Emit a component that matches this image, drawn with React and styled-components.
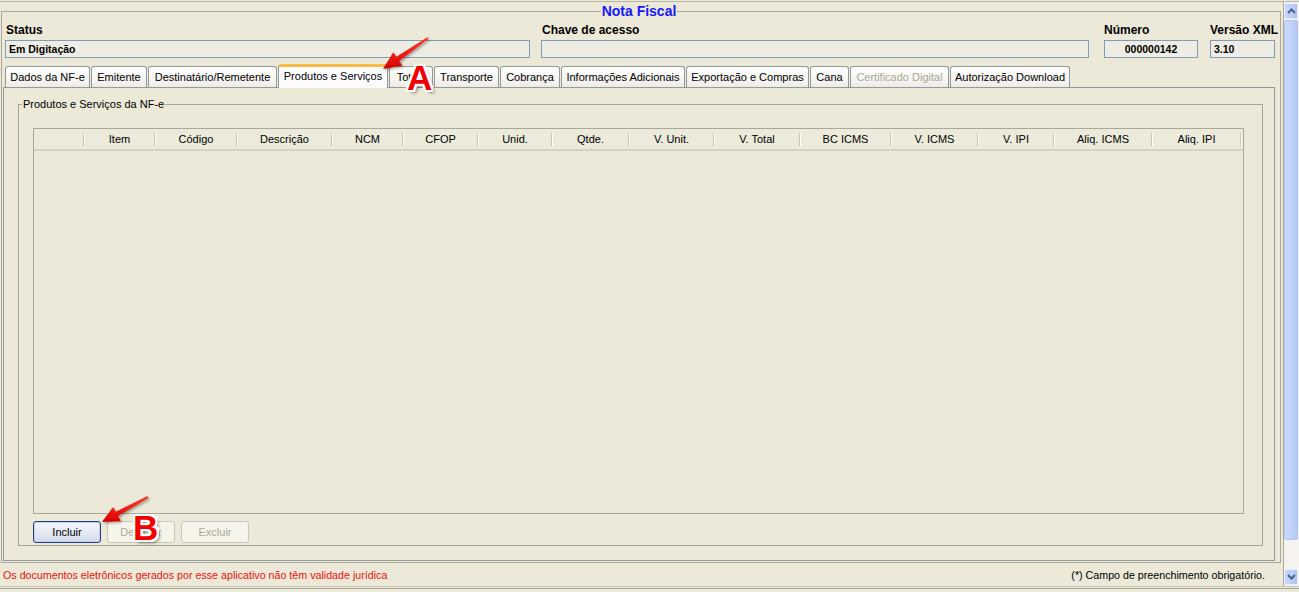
import React from "react";
import styled, { createGlobalStyle } from "styled-components";

const GlobalStyle = createGlobalStyle`
  html, body {
    margin: 0;
    padding: 0;
  }
  body {
    background: #ece9d8;
    font-family: "Liberation Sans", Arial, sans-serif;
    font-size: 11px;
    color: #000;
    overflow: hidden;
  }
`;

const Screen = styled.div`
  position: relative;
  width: 1299px;
  height: 592px;
  display: flex;
  flex-direction: column;
  background: #ece9d8;
  overflow: hidden;
`;

const TopEdge = styled.div`
  flex: none;
  height: 1px;
  border-bottom: 1px solid #b8b5a6;
`;

const BottomEdge = styled.div`
  flex: none;
  height: 5px;
  border-top: 1px solid #c9c6b8;
  position: relative;
  &::after {
    content: "";
    position: absolute;
    left: 0;
    right: 0;
    top: 1px;
    height: 1px;
    background: #a9a696;
  }
`;

const Body = styled.div`
  flex: 1;
  display: flex;
  min-height: 0;
`;

const Main = styled.div`
  flex: 1;
  display: flex;
  flex-direction: column;
  min-width: 0;
`;

/* ---------- outer titled frame ---------- */

const Frame = styled.fieldset`
  margin: 1px 2px 0 1px;
  padding: 4px 5px 1px 1px;
  border: 1px solid #aca899;
  min-width: 0;
`;

const FrameTitle = styled.legend`
  margin: 0 auto;
  padding: 0 1px;
  font-size: 14px;
  line-height: 16px;
  font-weight: bold;
  color: #1818ff;
`;

const FieldRow = styled.div`
  display: flex;
  padding-left: 2px;
`;

const Field = styled.div`
  width: ${({ $w }) => $w}px;
  margin-left: ${({ $ml }) => $ml || 0}px;
  display: flex;
  flex-direction: column;
`;

const Label = styled.div`
  font-size: 12px;
  line-height: 14px;
  font-weight: bold;
  padding-left: ${({ $pl }) => $pl || 0}px;
  margin-bottom: 3px;
  white-space: nowrap;
`;

const Input = styled.div`
  height: 16px;
  border: 1px solid #7f9db9;
  background: #efede3;
  font-size: 10.5px;
  font-weight: bold;
  line-height: 16px;
  padding: 0 3px;
  text-align: ${({ $center }) => ($center ? "center" : "left")};
`;

/* ---------- tabs ---------- */

const TabRow = styled.div`
  margin-top: 6px;
  height: 23px;
  display: flex;
  align-items: flex-end;
  gap: 1px;
  padding-left: 2px;
  position: relative;
  z-index: 1;
`;

const Tab = styled.div`
  box-sizing: border-box;
  width: ${({ $w }) => $w}px;
  height: ${({ $active }) => ($active ? 24 : 21)}px;
  margin-bottom: ${({ $active }) => ($active ? -1 : 0)}px;
  border: 1px solid #919b9c;
  border-bottom: none;
  border-top: ${({ $active }) =>
    $active ? "3px solid #f9bd45" : "1px solid #919b9c"};
  border-radius: 3px 3px 0 0;
  background: ${({ $active }) =>
    $active ? "#fcfcfe" : "linear-gradient(#fefefe, #f4f3ee 70%, #ecebe5)"};
  color: ${({ $disabled }) => ($disabled ? "#aca899" : "#000")};
  font-size: 11px;
  line-height: ${({ $active }) => ($active ? 19 : 20)}px;
  text-align: center;
  white-space: nowrap;
  overflow: hidden;
`;

const Panel = styled.div`
  border: 1px solid #919b9c;
  padding: 10px 11px 14px 14px;
`;

/* ---------- inner group ---------- */

const Group = styled.fieldset`
  margin: 0;
  padding: 17px 18px 2px 14px;
  border: 1px solid #a5a597;
  min-width: 0;
`;

const GroupTitle = styled.legend`
  margin-left: -11px;
  padding: 0 1px;
  font-size: 11px;
  line-height: 13px;
`;

const Table = styled.div`
  height: 384px;
  border: 1px solid #aca899;
  display: flex;
  flex-direction: column;
`;

const HeaderRow = styled.div`
  height: 20px;
  display: flex;
  background: #ebeadb;
  border-bottom: 2px solid #d6d2c2;
  box-shadow: 0 1px 0 #e2dfd0;
`;

const HeadCell = styled.div`
  position: relative;
  flex: none;
  width: ${({ $w }) => $w}px;
  line-height: 20px;
  text-align: center;
  white-space: nowrap;
  &::after {
    content: "";
    position: absolute;
    right: 0;
    top: 4px;
    bottom: 3px;
    width: 1px;
    background: #c7c5b2;
    box-shadow: 1px 0 0 #fff;
  }
`;

const TableBody = styled.div`
  flex: 1;
  background: #ece9d8;
`;

const Buttons = styled.div`
  display: flex;
  gap: 6px;
  margin-top: 7px;
`;

const Button = styled.div`
  box-sizing: border-box;
  width: 68px;
  height: 22px;
  border-radius: 3px;
  font-size: 11px;
  line-height: 20px;
  text-align: center;
  border: 1px solid ${({ $primary }) => ($primary ? "#23427c" : "#c9c7ba")};
  color: ${({ $primary }) => ($primary ? "#000" : "#aca899")};
  background: ${({ $primary }) =>
    $primary ? "linear-gradient(#f4f6fc, #e3e7f3 60%, #d3d9ec)" : "#f5f4ea"};
  box-shadow: ${({ $primary }) =>
    $primary ? "inset 0 0 0 1px #c0d0f2" : "none"};
`;

/* ---------- footer ---------- */

const Footer = styled.div`
  margin-top: 6px;
  display: flex;
  justify-content: space-between;
  padding: 0 18px 0 3px;
  line-height: 13px;
  font-size: 10.7px;
`;

const Warning = styled.span`
  color: #f01010;
`;

/* ---------- scrollbar ---------- */

const ScrollBar = styled.div`
  flex: none;
  width: 15px;
  border-left: 1px solid #aca899;
  display: flex;
  flex-direction: column;
  padding: 1px 0;
  background: #f4f3ee;
`;

const ScrollButton = styled.div`
  flex: none;
  height: 16px;
  margin: 0 1px 0 0;
  border-radius: 2px;
  border: 1px solid #e6ecfb;
  box-sizing: border-box;
  background: linear-gradient(90deg, #c8d6fb, #bccdf8 60%, #aec3f3);
  display: flex;
  align-items: center;
  justify-content: center;
`;

const Thumb = styled.div`
  flex: none;
  height: 520px;
  margin: 1px 1px 0 0;
  box-sizing: border-box;
  border: 1px solid #b2c5f4;
  border-radius: 2px;
  background: linear-gradient(90deg, #cbd9fc, #c2d2fa 50%, #b3c7f5);
`;

const Track = styled.div`
  flex: 1;
`;

/* ---------- annotations ---------- */

const Overlay = styled.svg`
  position: absolute;
  left: 0;
  top: 0;
  z-index: 5;
  pointer-events: none;
`;

const Marker = styled.span`
  position: absolute;
  z-index: 6;
  left: ${({ $x }) => $x}px;
  top: ${({ $y }) => $y}px;
  font-family: "Liberation Sans", Arial, sans-serif;
  font-size: 35px;
  line-height: 35px;
  font-weight: bold;
  color: #f20000;
  text-shadow: 2px 0 0 #fff, -2px 0 0 #fff, 0 2px 0 #fff, 0 -2px 0 #fff,
    2px 2px 0 #fff, -2px -2px 0 #fff, 2px -2px 0 #fff, -2px 2px 0 #fff,
    3px 3px 3px rgba(0, 0, 0, 0.45);
  pointer-events: none;
`;

const fields = [
  { label: "Status", value: "Em Digitação", w: 525, ml: 0, pl: 1 },
  { label: "Chave de acesso", value: "", w: 548, ml: 11, pl: 1 },
  { label: "Número", value: "000000142", w: 94, ml: 15, center: true },
  { label: "Versão XML", value: "3.10", w: 65, ml: 12 },
];

const tabs = [
  { name: "Dados da NF-e", w: 85 },
  { name: "Emitente", w: 56 },
  { name: "Destinatário/Remetente", w: 129 },
  { name: "Produtos e Serviços", w: 110, active: true },
  { name: "Totais", w: 44 },
  { name: "Transporte", w: 65 },
  { name: "Cobrança", w: 60 },
  { name: "Informações Adicionais", w: 124 },
  { name: "Exportação e Compras", w: 123 },
  { name: "Cana", w: 39 },
  { name: "Certificado Digital", w: 99, disabled: true },
  { name: "Autorização Download", w: 120 },
];

const columns = [
  ["", 50],
  ["Item", 71],
  ["Código", 82],
  ["Descrição", 95],
  ["NCM", 71],
  ["CFOP", 75],
  ["Unid.", 74],
  ["Qtde.", 77],
  ["V. Unit.", 85],
  ["V. Total", 86],
  ["BC ICMS", 91],
  ["V. ICMS", 87],
  ["V. IPI", 76],
  ["Aliq. ICMS", 98],
  ["Aliq. IPI", 89],
];

const Chevron = ({ up }) => (
  <svg width="9" height="6" viewBox="0 0 9 6">
    <path
      d={up ? "M1 5 L4.5 1.5 L8 5" : "M1 1 L4.5 4.5 L8 1"}
      fill="none"
      stroke="#4d6185"
      strokeWidth="2"
    />
  </svg>
);

export default function App() {
  return (
    <Screen>
      <GlobalStyle />
      <TopEdge />
      <Body>
        <Main>
          <Frame>
            <FrameTitle>Nota Fiscal</FrameTitle>
            <FieldRow>
              {fields.map((f) => (
                <Field key={f.label} $w={f.w} $ml={f.ml}>
                  <Label $pl={f.pl}>{f.label}</Label>
                  <Input $center={f.center}>{f.value}</Input>
                </Field>
              ))}
            </FieldRow>
            <TabRow>
              {tabs.map((t) => (
                <Tab
                  key={t.name}
                  $w={t.w}
                  $active={t.active}
                  $disabled={t.disabled}
                >
                  {t.name}
                </Tab>
              ))}
            </TabRow>
            <Panel>
              <Group>
                <GroupTitle>Produtos e Serviços da NF-e</GroupTitle>
                <Table>
                  <HeaderRow>
                    {columns.map(([name, w], i) => (
                      <HeadCell key={i} $w={w}>
                        {name}
                      </HeadCell>
                    ))}
                  </HeaderRow>
                  <TableBody />
                </Table>
                <Buttons>
                  <Button $primary>Incluir</Button>
                  <Button>Detalhar</Button>
                  <Button>Excluir</Button>
                </Buttons>
              </Group>
            </Panel>
          </Frame>
          <Footer>
            <Warning>
              Os documentos eletrônicos gerados por esse aplicativo não têm
              validade jurídica
            </Warning>
            <span>(*) Campo de preenchimento obrigatório.</span>
          </Footer>
        </Main>
        <ScrollBar>
          <ScrollButton>
            <Chevron up />
          </ScrollButton>
          <Thumb />
          <Track />
          <ScrollButton>
            <Chevron />
          </ScrollButton>
        </ScrollBar>
      </Body>
      <BottomEdge />

      <Overlay width="1299" height="592" viewBox="0 0 1299 592">
        <defs>
          <linearGradient id="redArrow" x1="0" y1="0" x2="0" y2="1">
            <stop offset="0" stopColor="#ff3a2a" />
            <stop offset="1" stopColor="#d80000" />
          </linearGradient>
          <filter id="arrowShadow" x="-20%" y="-20%" width="140%" height="140%">
            <feDropShadow dx="1.5" dy="1.5" stdDeviation="1" floodOpacity="0.35" />
          </filter>
        </defs>
        <polygon
          points="427.4,37.2 396.4,56.8 393.3,52.3 383,69 402.3,65.5 399.2,61 428.6,38.8"
          fill="url(#redArrow)"
          filter="url(#arrowShadow)"
        />
        <polygon
          points="147.5,496.1 115.7,511.7 113.1,506.9 102,522 120.7,520.9 118.1,516.1 148.5,497.9"
          fill="url(#redArrow)"
          filter="url(#arrowShadow)"
        />
      </Overlay>
      <Marker $x={407} $y={60}>A</Marker>
      <Marker $x={133} $y={510}>B</Marker>
    </Screen>
  );
}
